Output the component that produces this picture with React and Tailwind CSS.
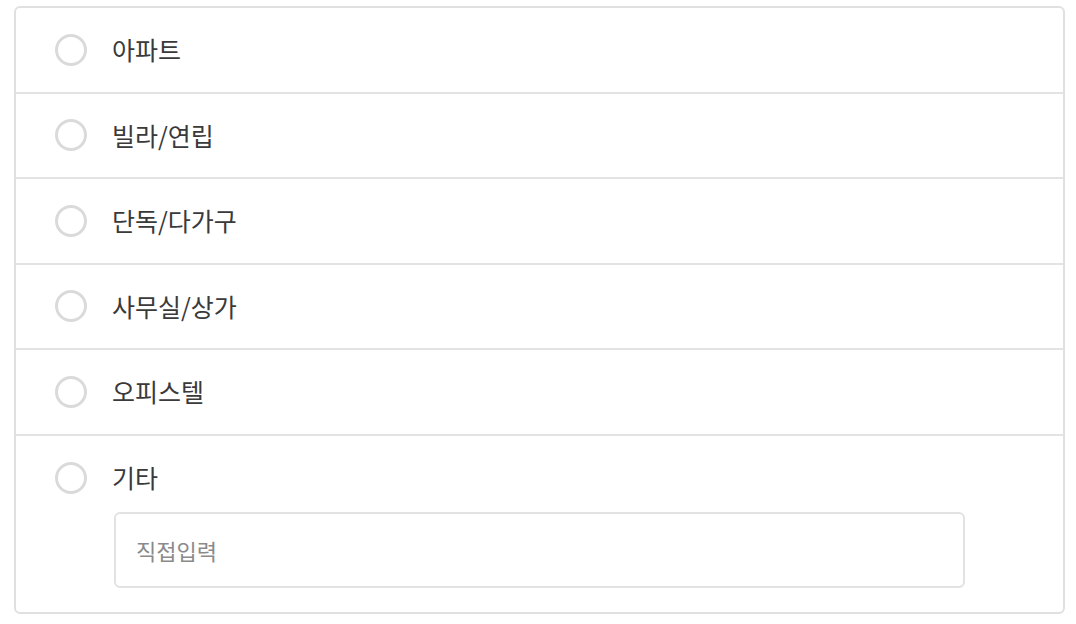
import React, { useState } from 'react';

const OPTIONS = ['아파트', '빌라/연립', '단독/다가구', '사무실/상가', '오피스텔'];

const Radio = ({ checked }) => (
  <span
    className={`w-[32px] h-[32px] rounded-full border-[3px] shrink-0 flex items-center justify-center ${
      checked ? 'border-[#3b82f6]' : 'border-[#dadada]'
    }`}
  >
    {checked && <span className="w-[14px] h-[14px] rounded-full bg-[#3b82f6]" />}
  </span>
);

const App = () => {
  const [selected, setSelected] = useState(null);
  const [etc, setEtc] = useState('');

  return (
    <div
      className="min-h-screen bg-white pt-[6px] pl-[14px]"
      style={{ fontFamily: '"Noto Sans CJK KR", "Noto Sans", sans-serif' }}
    >
      <div className="w-[1051px] border-2 border-[#e0e0e0] rounded-[6px] bg-white">
        {OPTIONS.map((label) => (
          <button
            key={label}
            type="button"
            onClick={() => setSelected(label)}
            className="w-full h-[85.5px] border-b-2 border-[#e3e3e3] flex items-center pl-[39px] text-left"
          >
            <Radio checked={selected === label} />
            <span className="ml-[25px] text-[25px] text-[#3a3a3a] leading-none">{label}</span>
          </button>
        ))}

        {/* 기타 */}
        <div className="pt-[26px] pb-[24px]">
          <button
            type="button"
            onClick={() => setSelected('기타')}
            className="flex items-center pl-[39px] h-[32px] text-left"
          >
            <Radio checked={selected === '기타'} />
            <span className="ml-[25px] text-[25px] text-[#3a3a3a] leading-none">기타</span>
          </button>
          <input
            value={etc}
            onChange={(e) => setEtc(e.target.value)}
            placeholder="직접입력"
            className="mt-[18px] ml-[98px] w-[851px] h-[76px] border-2 border-[#e2e2e2] rounded-[6px] pl-[20px] text-[22px] text-[#333333] placeholder:text-[#8a8a8a] outline-none"
          />
        </div>
      </div>
    </div>
  );
};

export default App;
